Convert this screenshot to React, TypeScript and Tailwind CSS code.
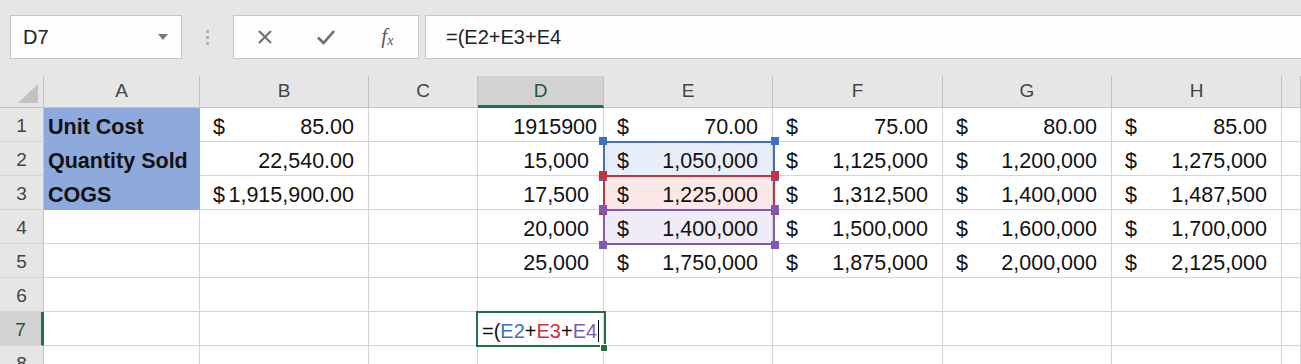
import React from "react";

type Cell = {
    t: "empty" | "label" | "acct" | "num" | "gen" | "formula";
    v?: string;
    fill?: string;
};

const E: Cell = {t: "empty"};

const rows: Cell[][] = [
    [{t: "label", v: "Unit Cost"}, {t: "acct", v: "85.00"}, E, {t: "gen", v: "1915900"}, {t: "acct", v: "70.00"}, {t: "acct", v: "75.00"}, {t: "acct", v: "80.00"}, {t: "acct", v: "85.00"}, E],
    [{t: "label", v: "Quantity Sold"}, {t: "num", v: "22,540.00"}, E, {t: "num", v: "15,000"}, {t: "acct", v: "1,050,000", fill: "blue"}, {t: "acct", v: "1,125,000"}, {t: "acct", v: "1,200,000"}, {t: "acct", v: "1,275,000"}, E],
    [{t: "label", v: "COGS"}, {t: "acct", v: "1,915,900.00"}, E, {t: "num", v: "17,500"}, {t: "acct", v: "1,225,000", fill: "red"}, {t: "acct", v: "1,312,500"}, {t: "acct", v: "1,400,000"}, {t: "acct", v: "1,487,500"}, E],
    [E, E, E, {t: "num", v: "20,000"}, {t: "acct", v: "1,400,000", fill: "purple"}, {t: "acct", v: "1,500,000"}, {t: "acct", v: "1,600,000"}, {t: "acct", v: "1,700,000"}, E],
    [E, E, E, {t: "num", v: "25,000"}, {t: "acct", v: "1,750,000"}, {t: "acct", v: "1,875,000"}, {t: "acct", v: "2,000,000"}, {t: "acct", v: "2,125,000"}, E],
    [E, E, E, E, E, E, E, E, E],
    [E, E, E, {t: "formula"}, E, E, E, E, E],
    [E, E, E, E, E, E, E, E, E],
];

const colLetters = ["A", "B", "C", "D", "E", "F", "G", "H", ""];

const fillClass = (fill?: string) => {
    if (fill === "blue") return "bg-[#e8eef9]";
    if (fill === "red") return "bg-[#fce9e7]";
    if (fill === "purple") return "bg-[#efebf7]";
    return "bg-white";
};

const SheetCell = ({cell}: { cell: Cell }) => {
    const base = "border-r border-b text-[21.5px] text-[#111] leading-[24px] flex items-center pt-[5px] whitespace-nowrap";
    if (cell.t === "label") {
        return <div className={`${base} bg-[#8ea9db] border-[#8ea9db] font-bold pl-[4px]`}>{cell.v}</div>;
    }
    if (cell.t === "acct") {
        return (
            <div className={`${base} ${fillClass(cell.fill)} border-[#d4d4d4] justify-between pl-[13px] pr-[14px]`}>
                <span>$</span>
                <span>{cell.v}</span>
            </div>
        );
    }
    if (cell.t === "num") {
        return <div className={`${base} bg-white border-[#d4d4d4] justify-end pr-[14px]`}>{cell.v}</div>;
    }
    if (cell.t === "gen") {
        return <div className={`${base} bg-white border-[#d4d4d4] justify-end pr-[6px]`}>{cell.v}</div>;
    }
    if (cell.t === "formula") {
        return (
            <div className={`${base} bg-white border-[#d4d4d4] pl-[4px]`}>
                <span className="text-[20px] shrink-0">
                    =(<span className="text-[#3f6fc6]">E2</span>+<span className="text-[#c8323c]">E3</span>+<span className="text-[#8059b8]">E4</span>
                </span>
                <span className="inline-block shrink-0 w-[1px] h-[22px] bg-black ml-[1px]"></span>
            </div>
        );
    }
    return <div className={`${base} bg-white border-[#d4d4d4]`}></div>;
};

// colored range reference boxes with little corner squares
const RefBox = ({top, color}: { top: string; color: "blue" | "red" | "purple" }) => {
    const border = color === "blue" ? "border-[#3f6fc6]" : color === "red" ? "border-[#c8323c]" : "border-[#8059b8]";
    const sq = color === "blue" ? "bg-[#3f6fc6]" : color === "red" ? "bg-[#c8323c]" : "bg-[#8059b8]";
    return (
        <div className={`absolute left-[603px] ${top} w-[172px] h-[36px] border-2 ${border}`}>
            <div className={`absolute -left-[6px] -top-[6px] w-[8px] h-[8px] ${sq}`}></div>
            <div className={`absolute -right-[6px] -top-[6px] w-[8px] h-[8px] ${sq}`}></div>
            <div className={`absolute -left-[6px] -bottom-[6px] w-[8px] h-[8px] ${sq}`}></div>
            <div className={`absolute -right-[6px] -bottom-[6px] w-[8px] h-[8px] ${sq}`}></div>
        </div>
    );
};

const FormulaBar = () => (
    <div className="h-[76px] pt-[15px] flex items-start">
        {/* name box */}
        <div className="ml-[10px] w-[172px] h-[44px] border border-[#c6c6c6] bg-[#fdfdfd] flex items-center justify-between pl-[12px] pr-[12px]">
            <span className="text-[20px] text-[#222]">D7</span>
            <svg width="12" height="8" viewBox="0 0 12 8">
                <polygon points="1,1 11,1 6,7" fill="#7a7a7a"/>
            </svg>
        </div>
        <div className="w-[51px] h-[44px] flex flex-col items-center justify-center gap-[3px]">
            <div className="w-[3px] h-[3px] bg-[#b4b4b4]"></div>
            <div className="w-[3px] h-[3px] bg-[#b4b4b4]"></div>
            <div className="w-[3px] h-[3px] bg-[#b4b4b4]"></div>
        </div>
        {/* cancel / enter / insert function */}
        <div className="w-[186px] h-[44px] border border-[#c6c6c6] bg-[#fdfdfd] flex items-center">
            <div className="w-[62px] flex justify-center">
                <svg width="16" height="16" viewBox="0 0 16 16">
                    <path d="M2 2 L14 14 M14 2 L2 14" stroke="#6e6e6e" strokeWidth="2"/>
                </svg>
            </div>
            <div className="w-[62px] flex justify-center">
                <svg width="20" height="16" viewBox="0 0 20 16">
                    <path d="M2 8.5 L7.5 14 L18 2" stroke="#6e6e6e" strokeWidth="2.6" fill="none"/>
                </svg>
            </div>
            <div className="w-[62px] flex justify-center">
                <span className="font-['Liberation_Serif',serif] italic text-[21px] text-[#5a5a5a] leading-none">
                    f<span className="text-[14px] align-[-2px]">x</span>
                </span>
            </div>
        </div>
        {/* formula input */}
        <div className="ml-[6px] flex-1 h-[44px] border-y border-l border-[#c6c6c6] bg-[#fdfdfd] flex items-center pl-[20px]">
            <span className="text-[20px] text-[#222]">=(E2+E3+E4</span>
        </div>
    </div>
);

export default function App() {
    return (
        <div className="w-[1301px] h-[364px] overflow-hidden bg-[#e6e6e6] font-['Liberation_Sans',Arial,sans-serif]">
            <FormulaBar/>
            <div className="relative grid grid-cols-[44px_156px_169px_109px_126px_169px_170px_169px_170px_1fr] grid-rows-[32px_repeat(8,34px)]">
                {/* corner */}
                <div className="border-r border-b border-[#c3c3c3] bg-[#e6e6e6] flex items-end justify-end pr-[5px] pb-[4px]">
                    <svg width="20" height="19" viewBox="0 0 20 19">
                        <polygon points="20,0 20,19 0,19" fill="#c2c2c2"/>
                    </svg>
                </div>
                {colLetters.map((l, i) =>
                    l === "D" ? (
                        <div key={i} className="border-r border-[#c3c3c3] bg-[#d2d2d2] border-b-[3px] border-b-[#217346] flex items-center justify-center text-[19px] text-[#215732] pt-[2px]">
                            {l}
                        </div>
                    ) : (
                        <div key={i} className="border-r border-b border-[#c3c3c3] bg-[#e6e6e6] flex items-center justify-center text-[19px] text-[#444]">
                            {l}
                        </div>
                    )
                )}
                {rows.map((row, r) => (
                    <React.Fragment key={r}>
                        {r === 6 ? (
                            <div className="border-b border-[#d4d4d4] border-r-[3px] border-r-[#217346] bg-[#d2d2d2] flex items-center justify-center text-[19px] text-[#215732] pt-[3px]">
                                {r + 1}
                            </div>
                        ) : (
                            <div className="border-r border-[#c3c3c3] border-b border-b-[#d4d4d4] bg-[#e6e6e6] flex items-center justify-center text-[19px] text-[#444] pt-[3px]">
                                {r + 1}
                            </div>
                        )}
                        {row.map((c, ci) => <SheetCell key={ci} cell={c}/>)}
                    </React.Fragment>
                ))}

                <RefBox top="top-[65px]" color="blue"/>
                <RefBox top="top-[99px]" color="red"/>
                <RefBox top="top-[133px]" color="purple"/>

                {/* active cell D7 */}
                <div className="absolute left-[476px] top-[235px] w-[130px] h-[36px] border-2 border-[#217346]"></div>
                <div className="absolute left-[600px] top-[268px] w-[8px] h-[8px] bg-[#217346] border border-white"></div>
            </div>
        </div>
    );
}
